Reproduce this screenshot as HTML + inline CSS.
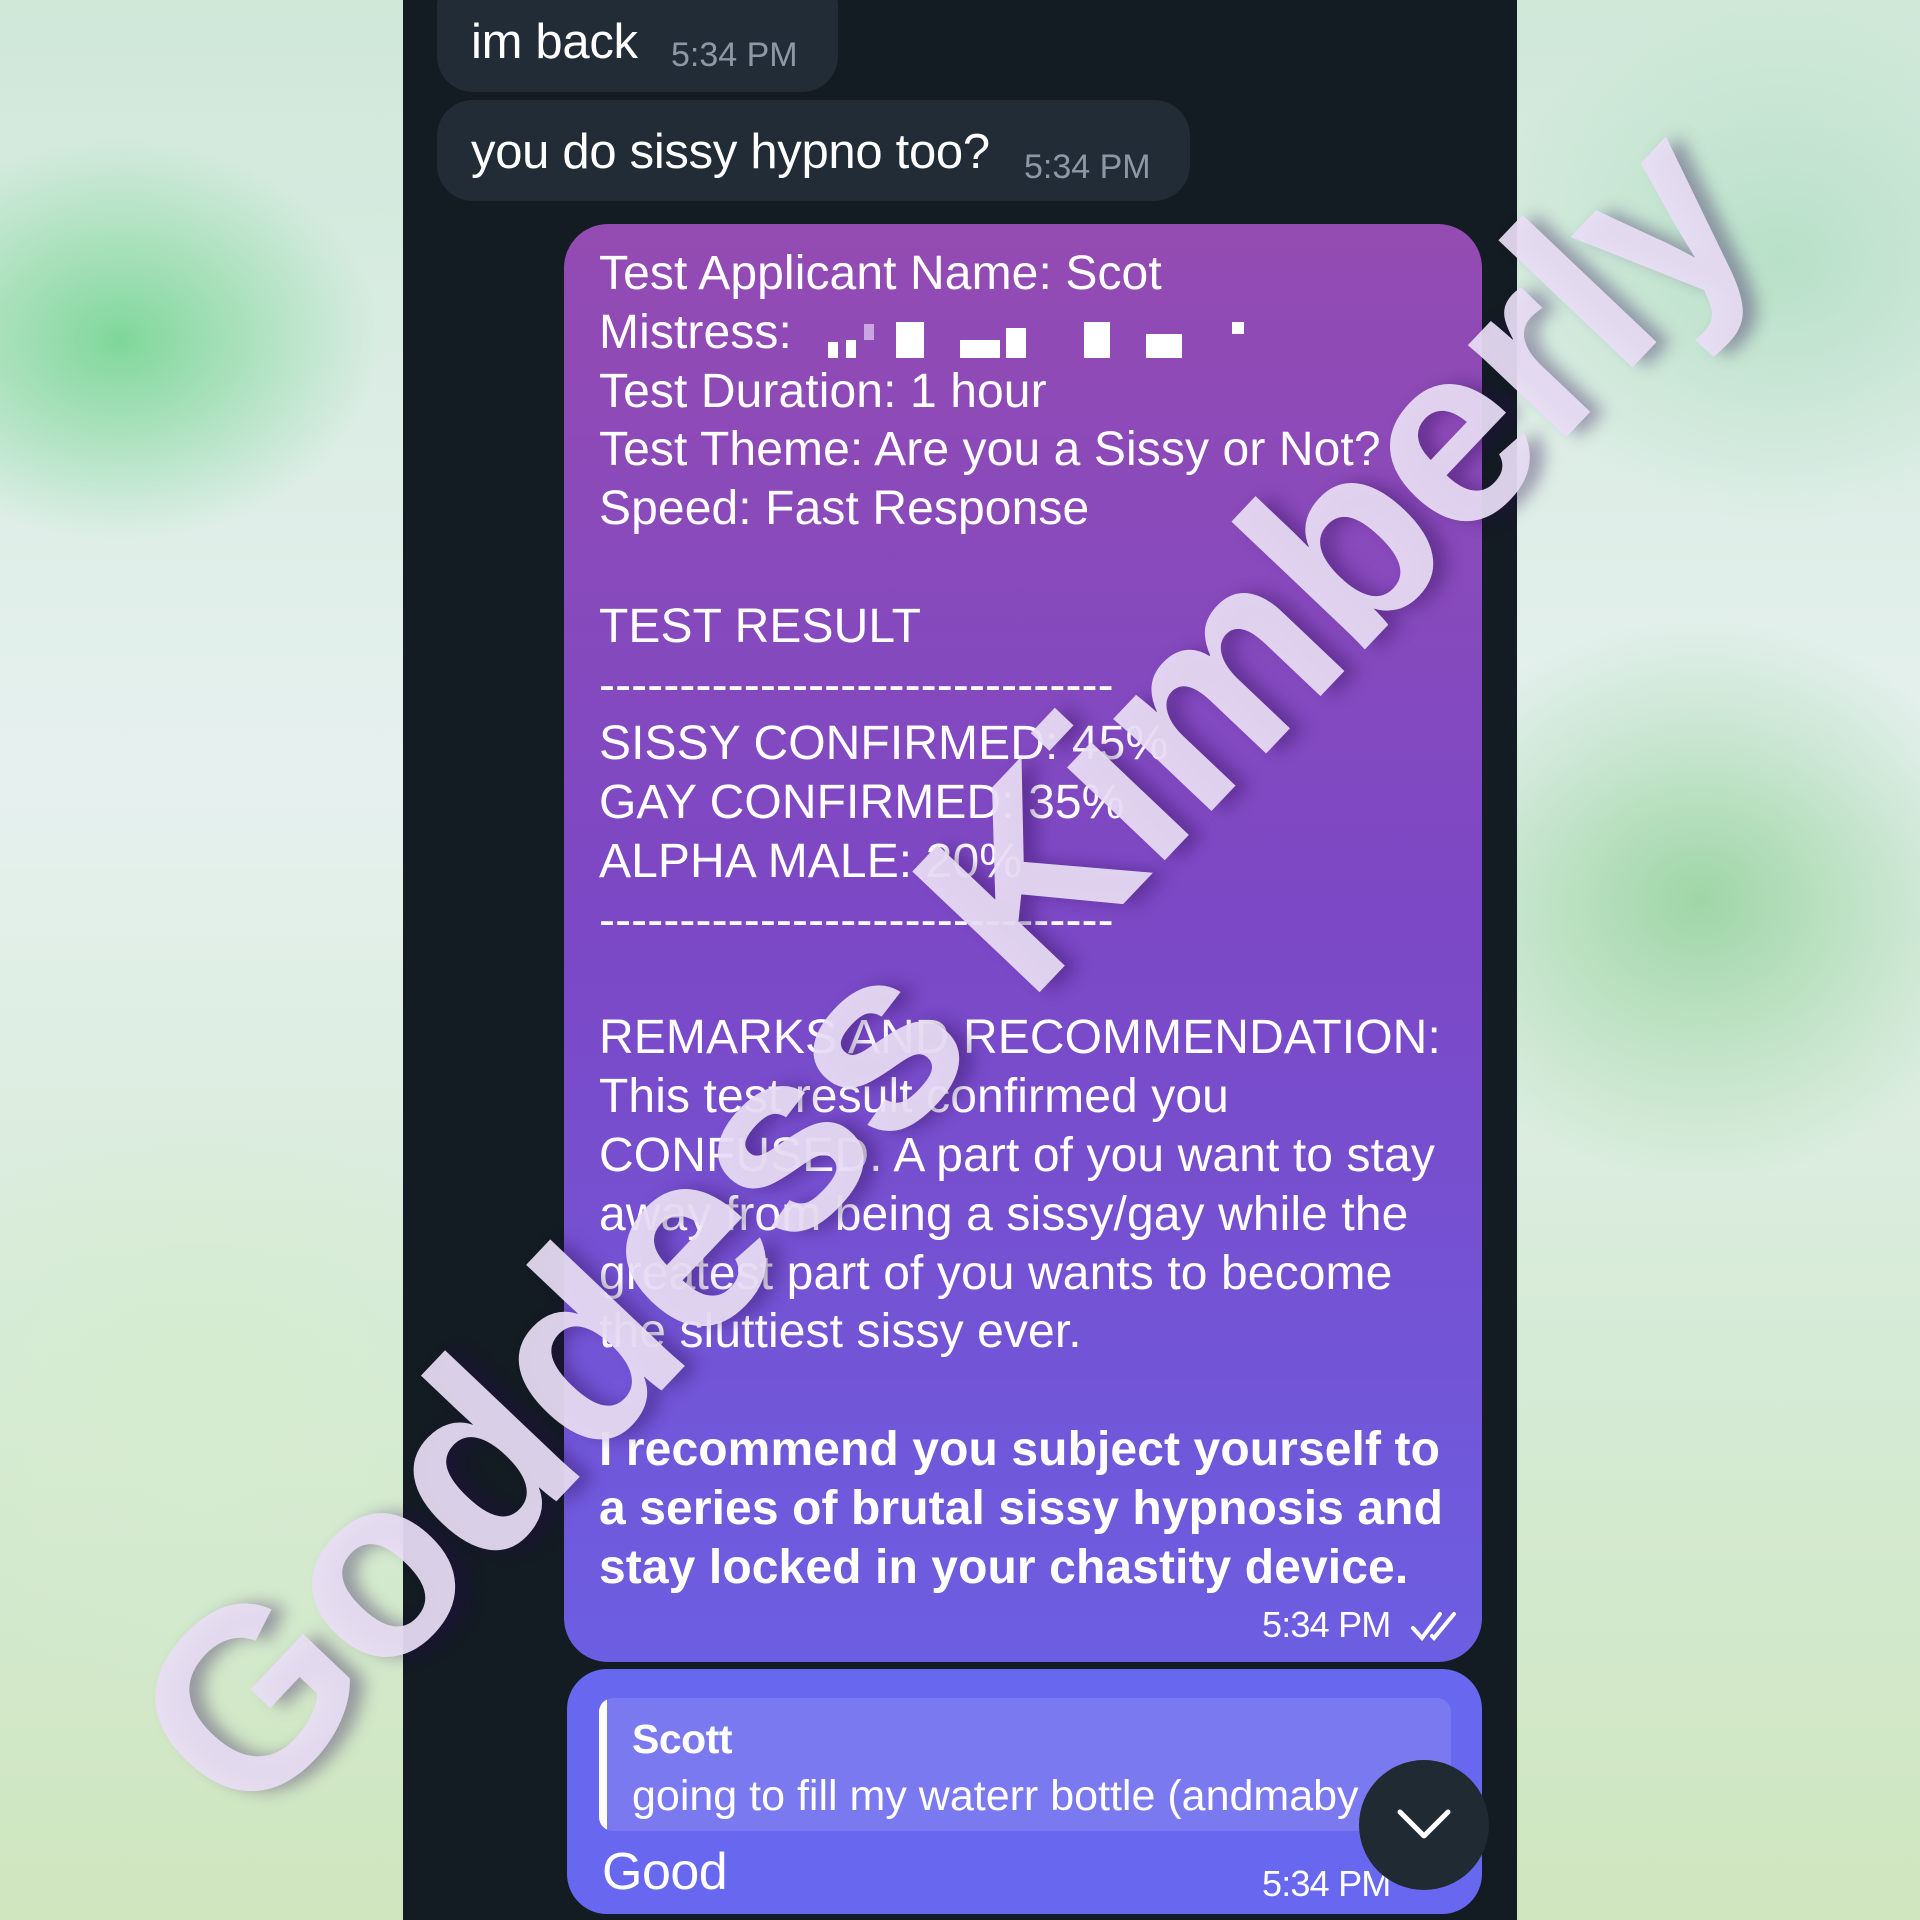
<!DOCTYPE html>
<html><head><meta charset="utf-8"><style>
html,body{margin:0;padding:0}
body{width:1920px;height:1920px;position:relative;overflow:hidden;font-family:"Liberation Sans",sans-serif;
background:
radial-gradient(ellipse 260px 200px at 120px 340px,#7fd79a 0%,rgba(127,215,154,0) 100%),
radial-gradient(ellipse 300px 300px at 200px 1400px,#d6ecd0 0%,rgba(214,236,208,0) 100%),
radial-gradient(ellipse 300px 260px at 1780px 260px,#b8e0c8 0%,rgba(184,224,200,0) 100%),
radial-gradient(ellipse 320px 280px at 1700px 900px,#9fd6a6 0%,rgba(159,214,166,0) 100%),
linear-gradient(180deg,#cfe8d8 0%,#e6f1ef 40%,#d6ebd6 70%,#cfe6bf 100%);}
.panel{position:absolute;left:403px;top:0;width:1114px;height:1920px;background:#131b23}
.b{position:absolute;color:#fff;font-size:49px;letter-spacing:-0.3px}
.in{background:#222c37;border-radius:36px}
.t{color:#8d98a4;font-size:34px;position:absolute}
.p{position:absolute;left:564px;top:224px;width:918px;height:1438px;border-radius:44px;background:linear-gradient(180deg,#944bb2 0%,#7b48c6 50%,#6c5ee2 100%)}
.txt{position:absolute;left:599px;top:245px;color:#fff;font-family:"Liberation Sans",sans-serif;font-size:48px;line-height:58.8px;letter-spacing:0.1px;white-space:pre;margin:0}
.q{position:absolute;left:567px;top:1669px;width:915px;height:245px;border-radius:40px;background:#6768ef}
.wm{position:absolute;left:940px;top:970px;transform:translate(-50%,-50%) rotate(-46.5deg);font-size:255px;font-weight:bold;color:rgba(232,222,244,0.93);white-space:nowrap;text-shadow:10px 10px 16px rgba(40,10,80,0.35);letter-spacing:-3px}
</style></head><body>
<div class="panel"></div>
<div class="in" style="position:absolute;left:437px;top:-30px;width:401px;height:122px"></div>
<div class="b" style="left:471px;top:14px">im back</div>
<div class="t" style="left:671px;top:36px">5:34 PM</div>
<div class="in" style="position:absolute;left:437px;top:100px;width:753px;height:101px"></div>
<div class="b" style="left:471px;top:124px">you do sissy hypno too?</div>
<div class="t" style="left:1024px;top:148px">5:34 PM</div>
<div class="p"></div>
<pre class="txt">Test Applicant Name: Scot
Mistress:
Test Duration: 1 hour
Test Theme: Are you a Sissy or Not?
Speed: Fast Response

TEST RESULT
--------------------------------
SISSY CONFIRMED: 45%
GAY CONFIRMED: 35%
ALPHA MALE: 20%
--------------------------------

REMARKS AND RECOMMENDATION:
This test result confirmed you
CONFUSED. A part of you want to stay
away from being a sissy/gay while the
greatest part of you wants to become
the sluttiest sissy ever.

<b>I recommend you subject yourself to
a series of brutal sissy hypnosis and
stay locked in your chastity device.</b></pre>
<div style="position:absolute;left:828px;top:342px;width:10px;height:16px;background:#fff"></div>
<div style="position:absolute;left:846px;top:340px;width:10px;height:18px;background:#fff"></div>
<div style="position:absolute;left:864px;top:324px;width:10px;height:16px;background:#c9a6e0"></div>
<div style="position:absolute;left:896px;top:322px;width:28px;height:36px;background:#fff"></div>
<div style="position:absolute;left:960px;top:340px;width:40px;height:18px;background:#fff"></div>
<div style="position:absolute;left:1006px;top:328px;width:20px;height:30px;background:#fff"></div>
<div style="position:absolute;left:1084px;top:322px;width:26px;height:36px;background:#fff"></div>
<div style="position:absolute;left:1146px;top:334px;width:36px;height:24px;background:#fff"></div>
<div style="position:absolute;left:1232px;top:322px;width:12px;height:12px;background:#fff"></div>
<div style="position:absolute;left:1262px;top:1604px;color:#fff;font-size:36px;letter-spacing:-0.8px">5:34 PM</div>
<svg style="position:absolute;left:1410px;top:1610px" width="52" height="34" viewBox="0 0 52 34"><path d="M3 18 L12 28 L30 4 M22 26 L24 28 L44 4" stroke="#fff" stroke-width="4" fill="none" stroke-linecap="round"/></svg>
<div class="q"></div>
<div style="position:absolute;left:599px;top:1698px;width:852px;height:133px;background:#7b79ef;border-radius:14px;overflow:hidden"><div style="width:8px;height:100%;background:#fff"></div></div>
<div style="position:absolute;left:632px;top:1716px;color:#fff;font-size:41px;font-weight:bold;letter-spacing:-0.5px">Scott</div>
<div style="position:absolute;left:632px;top:1772px;color:#fff;font-size:43px;letter-spacing:0px;white-space:nowrap;width:800px;overflow:hidden">going to fill my waterr bottle (andmaby</div>
<div style="position:absolute;left:602px;top:1842px;color:#fff;font-size:52px;letter-spacing:-0.5px">Good</div>
<div style="position:absolute;left:1262px;top:1863px;color:#fff;font-size:36px;letter-spacing:-0.8px">5:34 PM</div>
<div style="position:absolute;left:1359px;top:1760px;width:130px;height:130px;border-radius:50%;background:#202a33"></div>
<svg style="position:absolute;left:1394px;top:1804px" width="60" height="40" viewBox="0 0 60 40"><path d="M6 8 L30 32 L54 8" stroke="#fff" stroke-width="5" fill="none" stroke-linecap="round" stroke-linejoin="round"/></svg>
<div class="wm">Goddess Kimberly</div>
</body></html>
